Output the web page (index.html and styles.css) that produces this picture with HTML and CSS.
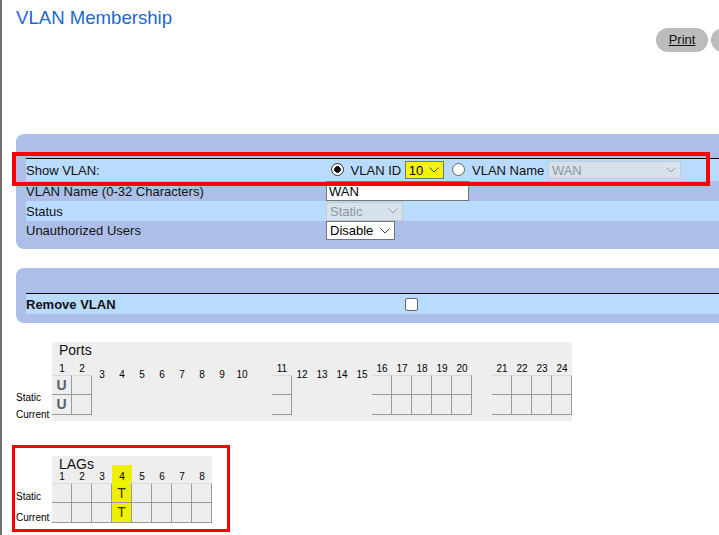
FILE: index.html
```html
<!DOCTYPE html>
<html lang="en">
<head>
<meta charset="utf-8">
<title>VLAN Membership</title>
<link rel="stylesheet" href="styles.css">
</head>
<body>
<div class="page">
  <h1 class="title">VLAN Membership</h1>
  <div class="toolbar">
    <a class="pill" href="#">Print</a>
    <a class="pill pill-edge" href="#" aria-label="Refresh"></a>
  </div>

  <form class="panel panel-main">
    <div class="rows">
      <div class="row light row-show">
        <span class="lbl">Show VLAN:</span>
        <span class="val"><input class="radio" type="radio" name="show" checked> VLAN ID <span class="sel-wrap"><select class="sel sel-id"><option>10</option></select><svg class="chev" width="10" height="6" viewBox="0 0 10 6"><polyline points="0.5,0.5 5,5 9.5,0.5" fill="none" stroke="#444" stroke-width="1"/></svg></span> <input class="radio" type="radio" name="show"> VLAN Name <span class="sel-wrap"><select class="sel sel-name" disabled><option>WAN</option></select><svg class="chev" width="10" height="6" viewBox="0 0 10 6"><polyline points="0.5,0.5 5,5 9.5,0.5" fill="none" stroke="#9a9a9a" stroke-width="1"/></svg></span></span>
      </div>
      <div class="row">
        <span class="lbl">VLAN Name (0-32 Characters)</span>
        <span class="val"><input class="txt" type="text" value="WAN"></span>
      </div>
      <div class="row light">
        <span class="lbl">Status</span>
        <span class="val"><span class="sel-wrap"><select class="sel sel-status" disabled><option>Static</option></select><svg class="chev" width="10" height="6" viewBox="0 0 10 6"><polyline points="0.5,0.5 5,5 9.5,0.5" fill="none" stroke="#9a9a9a" stroke-width="1"/></svg></span></span>
      </div>
      <div class="row row-unauth">
        <span class="lbl">Unauthorized Users</span>
        <span class="val"><span class="sel-wrap"><select class="sel sel-unauth"><option>Disable</option></select><svg class="chev" width="10" height="6" viewBox="0 0 10 6"><polyline points="0.5,0.5 5,5 9.5,0.5" fill="none" stroke="#444" stroke-width="1"/></svg></span></span>
      </div>
    </div>
    <div class="annot annot-show"></div>
  </form>

  <form class="panel panel-remove">
    <div class="rows">
      <div class="row light">
        <span class="lbl lbl-wide">Remove VLAN</span>
        <input class="check" type="checkbox">
      </div>
    </div>
  </form>

  <section class="members members-ports">
    <div class="side side-ports"><div>Static</div><div>Current</div></div>
    <div class="grid grid-ports">
      <div class="grid-title">Ports</div>
      <div class="cols">
        <div class="col"><div class="num">1</div><div class="cell first u">U</div><div class="cell u">U</div></div>
        <div class="col"><div class="num">2</div><div class="cell first"></div><div class="cell"></div></div>
        <div class="col"><div class="num low">3</div></div>
        <div class="col"><div class="num low">4</div></div>
        <div class="col"><div class="num low">5</div></div>
        <div class="col"><div class="num low">6</div></div>
        <div class="col"><div class="num low">7</div></div>
        <div class="col"><div class="num low">8</div></div>
        <div class="col"><div class="num low">9</div></div>
        <div class="col"><div class="num low">10</div></div>
        <div class="col"></div>
        <div class="col"><div class="num">11</div><div class="cell first"></div><div class="cell"></div></div>
        <div class="col"><div class="num low">12</div></div>
        <div class="col"><div class="num low">13</div></div>
        <div class="col"><div class="num low">14</div></div>
        <div class="col"><div class="num low">15</div></div>
        <div class="col"><div class="num">16</div><div class="cell first"></div><div class="cell"></div></div>
        <div class="col"><div class="num">17</div><div class="cell first"></div><div class="cell"></div></div>
        <div class="col"><div class="num">18</div><div class="cell first"></div><div class="cell"></div></div>
        <div class="col"><div class="num">19</div><div class="cell first"></div><div class="cell"></div></div>
        <div class="col"><div class="num">20</div><div class="cell first"></div><div class="cell"></div></div>
        <div class="col"></div>
        <div class="col"><div class="num">21</div><div class="cell first"></div><div class="cell"></div></div>
        <div class="col"><div class="num">22</div><div class="cell first"></div><div class="cell"></div></div>
        <div class="col"><div class="num">23</div><div class="cell first"></div><div class="cell"></div></div>
        <div class="col"><div class="num">24</div><div class="cell first"></div><div class="cell"></div></div>
      </div>
    </div>
  </section>

  <section class="members members-lags">
    <div class="side side-lags"><div>Static</div><div>Current</div></div>
    <div class="grid grid-lags">
      <div class="grid-title">LAGs</div>
      <div class="cols">
        <div class="col"><div class="num">1</div><div class="cell first"></div><div class="cell"></div></div>
        <div class="col"><div class="num">2</div><div class="cell first"></div><div class="cell"></div></div>
        <div class="col"><div class="num">3</div><div class="cell first"></div><div class="cell"></div></div>
        <div class="col hl"><div class="num">4</div><div class="cell first t">T</div><div class="cell t">T</div></div>
        <div class="col"><div class="num">5</div><div class="cell first"></div><div class="cell"></div></div>
        <div class="col"><div class="num">6</div><div class="cell first"></div><div class="cell"></div></div>
        <div class="col"><div class="num">7</div><div class="cell first"></div><div class="cell"></div></div>
        <div class="col"><div class="num">8</div><div class="cell first"></div><div class="cell"></div></div>
      </div>
    </div>
    <div class="annot annot-lags"></div>
  </section>
</div>
</body>
</html>
```

FILE: styles.css
```css
html, body {
  margin: 0;
  padding: 0;
  height: 100%;
  overflow: hidden;
  background: #fff;
}
body {
  font-family: "Liberation Sans", Arial, sans-serif;
  font-size: 13px;
  color: #111;
}
.page {
  position: relative;
  width: 800px;
  min-height: 535px;
  box-sizing: border-box;
  border-left: 2px solid #707070;
}
.title {
  margin: 0;
  padding: 8px 0 0 14px;
  font-size: 18.6px;
  line-height: 20px;
  font-weight: normal;
  color: #1b68d0;
}
.toolbar {
  display: flex;
  gap: 3px;
  height: 24px;
  padding-left: 654px;
}
.pill {
  flex: none;
  display: block;
  width: 52px;
  height: 24px;
  line-height: 24px;
  border-radius: 12px;
  background: #bcbcbc;
  color: #111;
  text-align: center;
  font-size: 13px;
  text-decoration: underline;
}
.pill-edge { width: 76px; }
.panel {
  position: relative;
  display: block;
  margin: 0 0 0 14px;
  padding: 24px 0 9px 10px;
  background: #adbfe8;
  border-radius: 8px 0 0 8px;
}
.panel-main { margin-top: 82px; }
.panel-remove { margin-top: 19px; padding-top: 25px; }
.rows { border-top: 1px solid #000; }
.row {
  display: flex;
  align-items: center;
  height: 20px;
}
.row.light { background: #b9dbfe; }
.row-show { height: 22px; }
.row-unauth { height: 19px; }
.lbl {
  flex: none;
  width: 300px;
  white-space: nowrap;
}
.lbl-wide { width: 375px; font-weight: bold; }
.val { white-space: nowrap; }

select, input {
  font-family: inherit;
  font-size: 13px;
  margin: 0;
  box-sizing: border-box;
}
.radio {
  -webkit-appearance: none;
  appearance: none;
  width: 13px;
  height: 13px;
  margin: 0 3px 0 5px;
  border: 1px solid #666;
  border-radius: 50%;
  background: #fff;
  vertical-align: -1px;
}
.radio:checked {
  border-color: #333;
  background: radial-gradient(circle, #111 0, #111 3px, #fff 3.6px);
}
.check {
  -webkit-appearance: none;
  appearance: none;
  width: 13px;
  height: 13px;
  margin: 0 0 0 4px;
  border: 1px solid #666;
  border-radius: 2px;
  background: #fff;
}
.txt {
  width: 143px;
  height: 20px;
  padding: 0 2px;
  border: 1px solid #767676;
  background: #fff;
  color: #000;
}
.sel-wrap {
  position: relative;
  display: inline-block;
}
.sel {
  -webkit-appearance: none;
  appearance: none;
  display: inline-block;
  vertical-align: baseline;
  height: 19px;
  padding: 0 0 0 3px;
  border: 1px solid #767676;
  border-radius: 0;
  background-color: #fff;
  color: #000;
}
.sel:disabled {
  background-color: #e4e4e4;
  border-color: #c6c6c6;
  color: #7a7a7a;
}
.sel-id { width: 39px; height: 18px; background-color: #f5f500; }
.sel-name { width: 133px; height: 18px; }
.sel-status { width: 77px; }
.sel-unauth { width: 69px; }
.chev {
  position: absolute;
  right: 5px;
  top: 50%;
  margin-top: -3px;
  pointer-events: none;
}

.annot {
  position: absolute;
  box-sizing: border-box;
  border: 4px solid #f00;
  pointer-events: none;
}
.annot-show { left: -4px; top: 18px; width: 698px; height: 34px; }
.annot-lags { left: -4px; top: -11px; width: 218px; height: 87px; border-width: 3px; }

.members {
  position: relative;
  display: flex;
  align-items: flex-start;
  margin-left: 14px;
}
.members-ports { margin-top: 19px; }
.members-lags { margin-top: 33px; }
.side {
  flex: none;
  width: 36px;
  font-size: 10px;
  color: #000;
}
.side-ports { padding-top: 47px; line-height: 17px; }
.side-lags { padding-top: 30px; line-height: 21px; }
.grid {
  flex: none;
  background: #eee;
}
.grid-ports { padding-bottom: 6px; }
.grid-title {
  font-size: 14px;
  line-height: 16px;
  padding-left: 7px;
  color: #111;
}
.grid-lags .grid-title { height: 9px; }
.cols {
  display: flex;
  align-items: flex-start;
}
.col { flex: none; width: 20px; }
.col.hl { background: #efef00; }
.num {
  height: 17px;
  box-sizing: border-box;
  padding-top: 5px;
  font-size: 10px;
  line-height: 12px;
  text-align: center;
  color: #000;
}
.num.low { padding-top: 11px; }
.grid-lags .num { height: 18px; padding-top: 6px; }
.cell {
  height: 20px;
  box-sizing: border-box;
  border-right: 1px solid #9a9a9a;
  border-bottom: 1px solid #9a9a9a;
  text-align: center;
}
.cell.first { border-top: 1px solid #dcdcdc; }
.cell.u {
  font-size: 14px;
  font-weight: bold;
  line-height: 18px;
  color: #5a616a;
}
.cell.t {
  font-size: 14px;
  line-height: 18px;
  color: #333320;
}
```
